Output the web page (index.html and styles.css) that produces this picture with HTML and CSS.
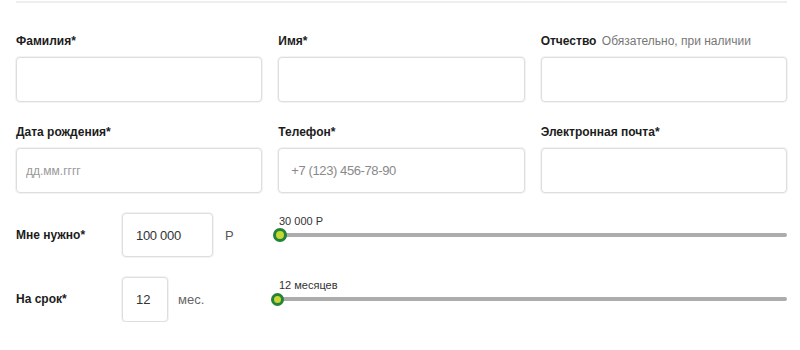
FILE: index.html
```html
<!DOCTYPE html>
<html lang="ru">
<head>
    <meta charset="UTF-8">
    <meta name="viewport" content="width=device-width, initial-scale=1.0">
    <title>Заявка на кредит</title>
    <link rel="stylesheet" href="styles.css">
</head>
<body>
    <div class="container">
        <form class="loan-form">
            <div class="fields">
                <div class="field">
                    <label class="label">Фамилия*</label>
                    <input class="input" type="text" name="last_name">
                </div>
                <div class="field">
                    <label class="label">Имя*</label>
                    <input class="input" type="text" name="first_name">
                </div>
                <div class="field">
                    <label class="label">Отчество <span class="hint">Обязательно, при наличии</span></label>
                    <input class="input" type="text" name="middle_name">
                </div>
                <div class="field">
                    <label class="label">Дата рождения*</label>
                    <input class="input input-date" type="text" name="birth" placeholder="дд.мм.гггг">
                </div>
                <div class="field">
                    <label class="label">Телефон*</label>
                    <input class="input" type="text" name="phone" placeholder="+7 (123) 456-78-90">
                </div>
                <div class="field">
                    <label class="label">Электронная почта*</label>
                    <input class="input" type="text" name="email">
                </div>
            </div>

            <div class="range-row">
                <label class="label">Мне нужно*</label>
                <div class="amount">
                    <input class="input input-sum" type="text" name="sum" value="100 000">
                    <span class="unit">Р</span>
                </div>
                <div class="slider">
                    <div class="slider-value">30 000 Р</div>
                    <div class="track"><span class="thumb"></span></div>
                </div>
            </div>

            <div class="range-row">
                <label class="label">На срок*</label>
                <div class="amount">
                    <input class="input input-term" type="text" name="term" value="12">
                    <span class="unit unit-term">мес.</span>
                </div>
                <div class="slider slider-term">
                    <div class="slider-value">12 месяцев</div>
                    <div class="track"><span class="thumb thumb-small"></span></div>
                </div>
            </div>
        </form>
    </div>
</body>
</html>
```

FILE: styles.css
```css
body {
    margin: 0;
    padding: 0;
    background: #fff;
    font-family: "Liberation Sans", Arial, sans-serif;
    color: #222;
}
.container {
    margin: 1px 13px 0 16px;
    border-top: 2px solid #eeeeee;
}
.loan-form {
    padding-top: 31px;
}
.fields {
    display: grid;
    grid-template-columns: repeat(3, 1fr);
    column-gap: 16px;
    row-gap: 23px;
}
.label {
    display: block;
    font-size: 12px;
    line-height: 15px;
    font-weight: bold;
    color: #1c1c1c;
}
.hint {
    font-weight: normal;
    color: #777;
    margin-left: 2px;
}
.field .label {
    margin-bottom: 8px;
}
.input {
    display: block;
    width: 100%;
    height: 45px;
    box-sizing: border-box;
    border: 1px solid #dedede;
    box-shadow: 0 0 0 1px #f3f3f3;
    border-radius: 4px;
    padding: 0 12px;
    font-family: inherit;
    font-size: 13px;
    color: #333;
    outline: none;
    background: #fff;
}
.input::placeholder {
    color: #8a8a8a;
    letter-spacing: -0.4px;
}
.input-date {
    padding-left: 9px;
}
.input-date::placeholder {
    font-size: 12px;
    letter-spacing: 0;
    color: #999;
}
.range-row {
    display: grid;
    grid-template-columns: 106px 150px 1fr;
    align-items: center;
    height: 44px;
    margin-top: 20px;
}
.range-row + .range-row {
    height: 45px;
}
.amount {
    display: flex;
    align-items: center;
}
.input-sum {
    width: 91px;
    height: 44px;
    padding-left: 13px;
    letter-spacing: -0.3px;
}
.input-term {
    width: 46px;
    height: 45px;
    padding-left: 13px;
}
.unit {
    margin-left: 12px;
    font-size: 13px;
    color: #555;
}
.unit-term {
    margin-left: 10px;
    color: #666;
}
.slider {
    align-self: stretch;
    padding-top: 2px;
}
.slider-value {
    font-size: 11px;
    line-height: 13px;
    color: #333;
    padding-left: 7px;
}
.track {
    position: relative;
    height: 4px;
    margin: 5px 0 0 8px;
    border-radius: 2px;
    background: #acacac;
}
.slider-term .track {
    margin-left: 5px;
}
.thumb {
    position: absolute;
    left: -7px;
    top: -5px;
    width: 8px;
    height: 8px;
    border-radius: 50%;
    background: #c5d830;
    border: 3px solid #24823a;
}
.thumb-small {
    left: -6px;
    top: -4px;
    width: 7px;
    height: 7px;
}
```
